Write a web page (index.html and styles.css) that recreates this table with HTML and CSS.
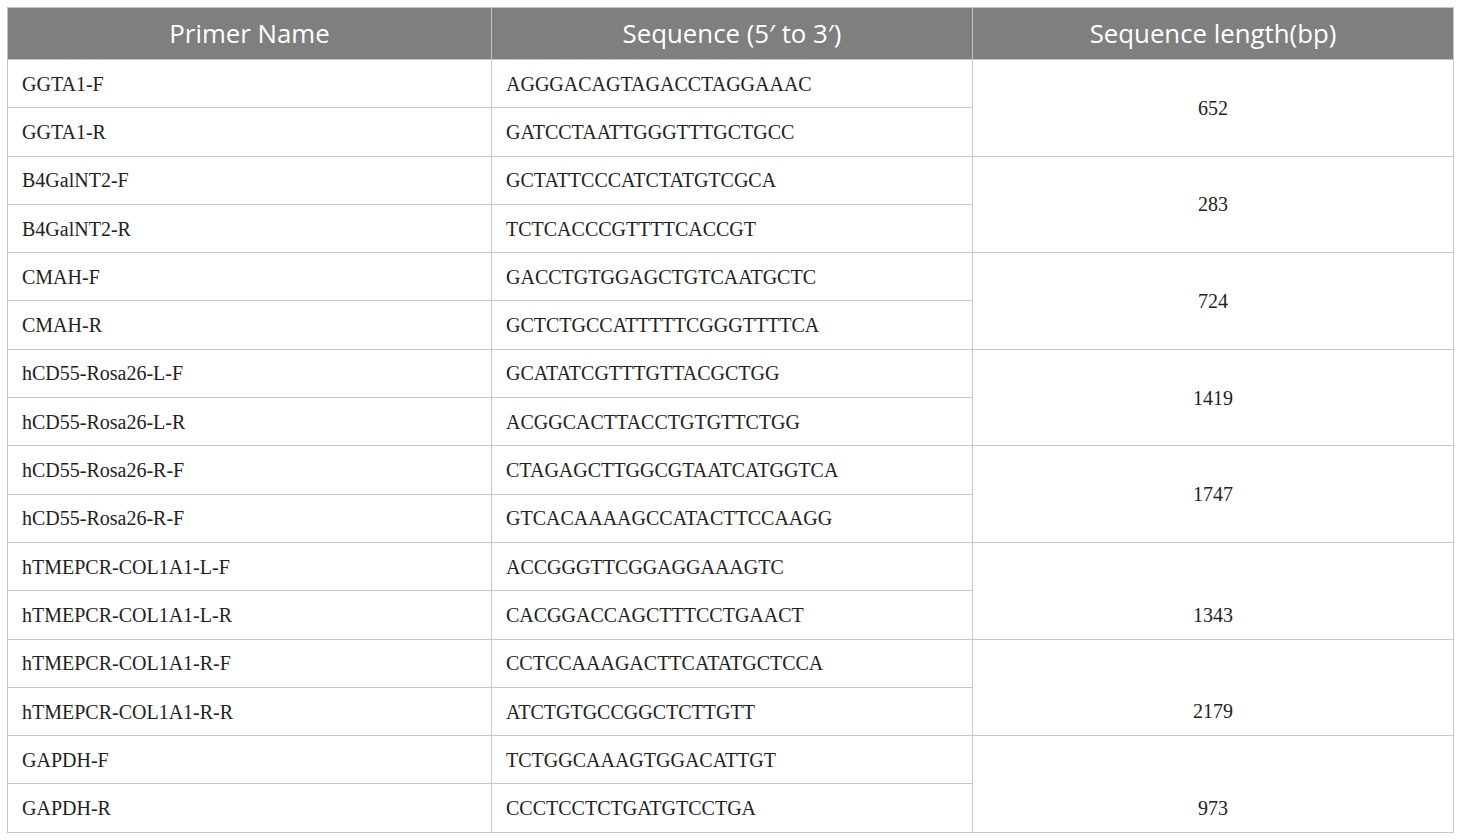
FILE: index.html
```html
<!DOCTYPE html>
<html lang="en">
<head>
<meta charset="utf-8">
<title>Primer table</title>
<link rel="stylesheet" href="styles.css">
</head>
<body>
<div class="page">
<table class="primers">
  <colgroup>
    <col class="c1"><col class="c2"><col class="c3">
  </colgroup>
  <thead>
    <tr><th>Primer Name</th><th>Sequence (5′ to 3′)</th><th>Sequence length(bp)</th></tr>
  </thead>
  <tbody>
    <tr><td>GGTA1-F</td><td>AGGGACAGTAGACCTAGGAAAC</td><td class="len" rowspan="2">652</td></tr>
    <tr><td>GGTA1-R</td><td>GATCCTAATTGGGTTTGCTGCC</td></tr>
    <tr><td>B4GalNT2-F</td><td>GCTATTCCCATCTATGTCGCA</td><td class="len" rowspan="2">283</td></tr>
    <tr><td>B4GalNT2-R</td><td>TCTCACCCGTTTTCACCGT</td></tr>
    <tr><td>CMAH-F</td><td>GACCTGTGGAGCTGTCAATGCTC</td><td class="len" rowspan="2">724</td></tr>
    <tr><td>CMAH-R</td><td>GCTCTGCCATTTTTCGGGTTTTCA</td></tr>
    <tr><td>hCD55-Rosa26-L-F</td><td>GCATATCGTTTGTTACGCTGG</td><td class="len" rowspan="2">1419</td></tr>
    <tr><td>hCD55-Rosa26-L-R</td><td>ACGGCACTTACCTGTGTTCTGG</td></tr>
    <tr><td>hCD55-Rosa26-R-F</td><td>CTAGAGCTTGGCGTAATCATGGTCA</td><td class="len" rowspan="2">1747</td></tr>
    <tr><td>hCD55-Rosa26-R-F</td><td>GTCACAAAAGCCATACTTCCAAGG</td></tr>
    <tr><td>hTMEPCR-COL1A1-L-F</td><td>ACCGGGTTCGGAGGAAAGTC</td><td class="len low" rowspan="2">1343</td></tr>
    <tr><td>hTMEPCR-COL1A1-L-R</td><td>CACGGACCAGCTTTCCTGAACT</td></tr>
    <tr><td>hTMEPCR-COL1A1-R-F</td><td>CCTCCAAAGACTTCATATGCTCCA</td><td class="len low" rowspan="2">2179</td></tr>
    <tr><td>hTMEPCR-COL1A1-R-R</td><td>ATCTGTGCCGGCTCTTGTT</td></tr>
    <tr><td>GAPDH-F</td><td>TCTGGCAAAGTGGACATTGT</td><td class="len low" rowspan="2">973</td></tr>
    <tr><td>GAPDH-R</td><td>CCCTCCTCTGATGTCCTGA</td></tr>
  </tbody>
</table>
</div>
</body>
</html>
```
FILE: styles.css
```css
html, body {
  margin: 0;
  padding: 0;
  background: #ffffff;
}

.page {
  padding: 7px;
}

.primers {
  width: 1446px;
  border-collapse: collapse;
  table-layout: fixed;
  font-family: "Liberation Serif", "Times New Roman", serif;
  font-size: 20px;
  color: #222222;
}

.c1 { width: 484px; }
.c2 { width: 481px; }
.c3 { width: 481px; }

.primers th {
  height: 52px;
  padding: 0 14px;
  background: #7f7f7f;
  color: #ffffff;
  font-family: "Open Sans", "Liberation Sans", sans-serif;
  font-weight: 400;
  font-size: 25.8px;
  text-align: center;
  vertical-align: middle;
  border: 1px solid #c4c4c4;
  line-height: 1;
  box-sizing: border-box;
}

.primers td {
  height: 48.3px;
  padding: 0 14px;
  border: 1px solid #c8c8c8;
  text-align: left;
  vertical-align: middle;
  line-height: 24px;
  box-sizing: border-box;
}

.primers td.len {
  text-align: center;
}

.primers td.len.low {
  vertical-align: bottom;
  padding-bottom: 12px;
}
```
